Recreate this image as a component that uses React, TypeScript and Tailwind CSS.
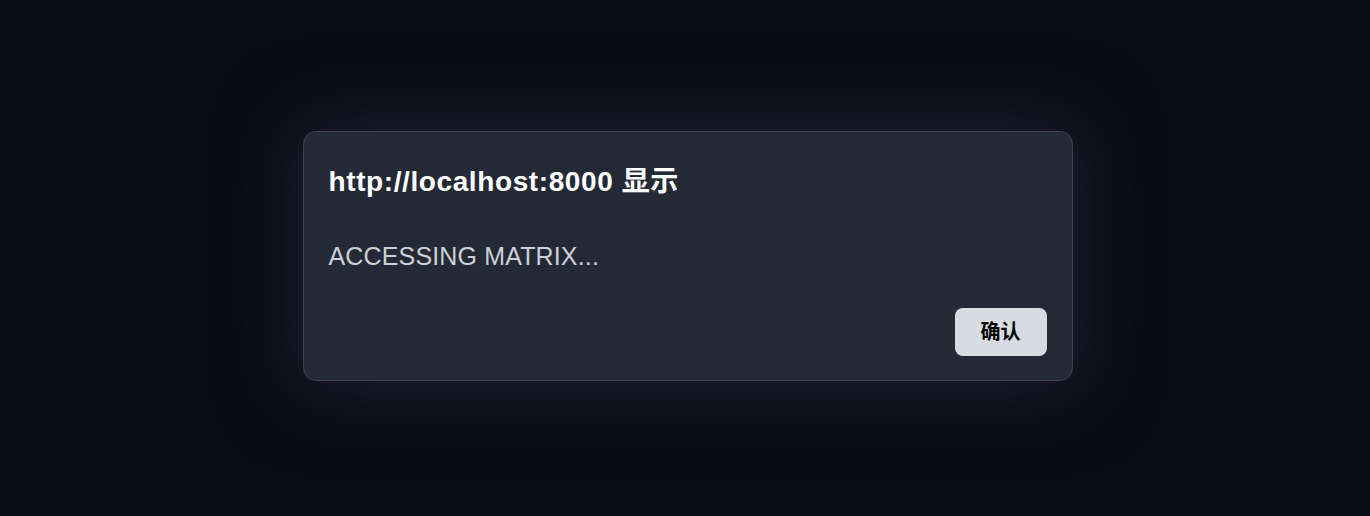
export default function App() {
  return (
    <div
      className="w-full h-[516px] bg-[#0b0c12] flex justify-center pt-[131px] pl-[5px]"
      style={{ fontFamily: '"Liberation Sans", Arial, "Noto Sans CJK SC", sans-serif' }}
    >
      {/* alert dialog */}
      <div className="w-[770px] h-[250px] rounded-[13px] border border-[#3b414d] bg-[#242a35] shadow-[0_0_70px_12px_rgba(45,45,80,0.5)] flex flex-col px-[25px] pt-[33px] pb-[24px]">
        <h1 className="text-[28px] leading-[34px] font-bold tracking-[0.6px] text-white">
          http://localhost:8000 显示
        </h1>
        <p className="mt-[42px] text-[25px] leading-[30px] tracking-[0.15px] text-[#cdd0d8]">ACCESSING MATRIX...</p>
        <div className="mt-auto flex justify-end">
          <button className="w-[92px] h-[48px] rounded-[8px] bg-[#d9dbe2] text-black text-[20px] font-bold">
            确认
          </button>
        </div>
      </div>
    </div>
  );
}
